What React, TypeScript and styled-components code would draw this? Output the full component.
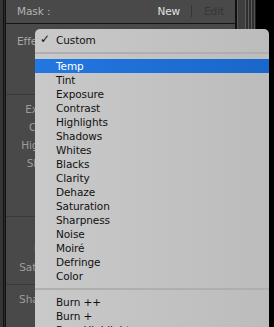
import * as React from 'react'
import styled, { createGlobalStyle } from 'styled-components'

const GlobalStyle = createGlobalStyle`
  *, *::before, *::after {
    box-sizing: border-box;
  }

  html, body {
    margin: 0;
    padding: 0;
    background: #000;
  }

  body {
    font-family: 'DejaVu Sans', 'Liberation Sans', sans-serif;
  }
`

const Screen = styled.div`
  position: relative;
  display: flex;
  width: 274px;
  height: 327px;
  overflow: hidden;
  background: #000;
  font-size: 10.5px;
  letter-spacing: -0.1px;
`

// Thin window frame on the left of the panel
const LeftEdge = styled.div`
  flex: 0 0 6px;
  background: linear-gradient(
    to right,
    #353535 0 3px,
    #121212 3px 4px,
    #2c2c2c 4px 5px,
    #101010 5px 6px
  );
`

const Panel = styled.div`
  flex: 0 0 231px;
  display: flex;
  flex-direction: column;
  overflow: hidden;
  background: #494949;
  border-right: 2px solid #111;
`

// Scroll gutter strip to the right of the panel
const RightEdge = styled.div`
  flex: 0 0 19px;
  background: linear-gradient(
    to right,
    #575757 0 1px,
    #3e3e3e 1px 8px,
    #5c5c5c 8px 9px,
    #2f2f2f 9px 11px,
    #5c5c5c 11px 12px,
    #2f2f2f 12px 14px,
    #5c5c5c 14px 15px,
    #2f2f2f 15px 17px,
    #555 17px 18px,
    #1d1d1d 18px 19px
  );
`

const Header = styled.div`
  flex-shrink: 0;
  display: flex;
  align-items: center;
  height: 24px;
  padding: 0 11px 2px;
  border-bottom: 1px solid #161616;
`

const HeaderTitle = styled.span`
  flex: 1;
  color: #b2b2b2;
`

const HeaderAction = styled.span<{ $disabled?: boolean }>`
  color: ${p => (p.$disabled ? '#363636' : '#e4e4e4')};
`

const HeaderDivider = styled.span`
  width: 1px;
  height: 12px;
  margin: 0 12px 0 11px;
  background: #363636;
`

const Section = styled.div<{ $first?: boolean }>`
  flex-shrink: 0;
  display: flex;
  flex-direction: column;
  padding: ${p => (p.$first ? '8px 0 8px' : '5px 0 8px')};
  border-top: ${p => (p.$first ? 'none' : '1px solid #3a3a3a')};
`

const Row = styled.div`
  display: grid;
  grid-template-columns: 67px 1fr;
  align-items: center;
  height: 18px;
`

const RowLabel = styled.span`
  text-align: right;
  color: #9d9d9d;
  white-space: nowrap;
`

const EffectLabel = styled.span`
  padding-left: 11px;
  color: #a8a8a8;
  white-space: nowrap;
`

const Track = styled.span`
  height: 2px;
  margin: 0 40px 0 10px;
  background: #2b2b2b;
`

const Menu = styled.div`
  position: absolute;
  left: 35px;
  top: 29px;
  width: 234px;
  bottom: -40px;
  padding-top: 4px;
  border-radius: 5px 5px 0 0;
  background: linear-gradient(to right, #c9c9c9, #bcbcbc);
  color: #111;
`

const MenuItem = styled.div<{ $active?: boolean }>`
  position: relative;
  height: 14px;
  line-height: 14px;
  padding-left: 21px;
  white-space: nowrap;
  color: ${p => (p.$active ? '#fff' : '#111')};
  background: ${p => (p.$active ? 'linear-gradient(to right, #2277e1, #1a67ca)' : 'none')};
`

const Check = styled.span`
  position: absolute;
  left: 5px;
  top: -1px;
  font-size: 12px;
`

const MenuSeparator = styled.div`
  display: flex;
  align-items: center;
  height: 12px;

  &::before {
    content: '';
    flex: 1;
    height: 2px;
    background: #afafaf;
  }
`

const panelSections = [
  ['Temp', 'Tint'],
  ['Exposure', 'Contrast', 'Highlights', 'Shadows', 'Whites', 'Blacks'],
  ['Clarity', 'Dehaze', 'Saturation'],
  ['Sharpness', 'Noise', 'Moiré', 'Defringe', 'Color']
]

const menuGroups = [
  ['Temp', 'Tint', 'Exposure', 'Contrast', 'Highlights', 'Shadows', 'Whites', 'Blacks',
    'Clarity', 'Dehaze', 'Saturation', 'Sharpness', 'Noise', 'Moiré', 'Defringe', 'Color'],
  ['Burn ++', 'Burn +', 'Burn Highlights', 'Burn Shadows', 'Dodge +']
]

export default function App () {
  return (
    <Screen>
      <GlobalStyle />
      <LeftEdge />
      <Panel>
        <Header>
          <HeaderTitle>Mask :</HeaderTitle>
          <HeaderAction>New</HeaderAction>
          <HeaderDivider />
          <HeaderAction $disabled>Edit</HeaderAction>
        </Header>
        {panelSections.map((rows, i) => (
          <Section key={i} $first={i === 0}>
            {i === 0 && (
              <Row>
                <EffectLabel>Effect :</EffectLabel>
              </Row>
            )}
            {rows.map(label => (
              <Row key={label}>
                <RowLabel>{label}</RowLabel>
                <Track />
              </Row>
            ))}
          </Section>
        ))}
      </Panel>
      <RightEdge />

      <Menu>
        <MenuItem>
          <Check>✓</Check>
          Custom
        </MenuItem>
        {menuGroups.map((items, i) => (
          <React.Fragment key={i}>
            <MenuSeparator />
            {items.map(item => (
              <MenuItem key={item} $active={item === 'Temp'}>{item}</MenuItem>
            ))}
          </React.Fragment>
        ))}
      </Menu>
    </Screen>
  )
}
